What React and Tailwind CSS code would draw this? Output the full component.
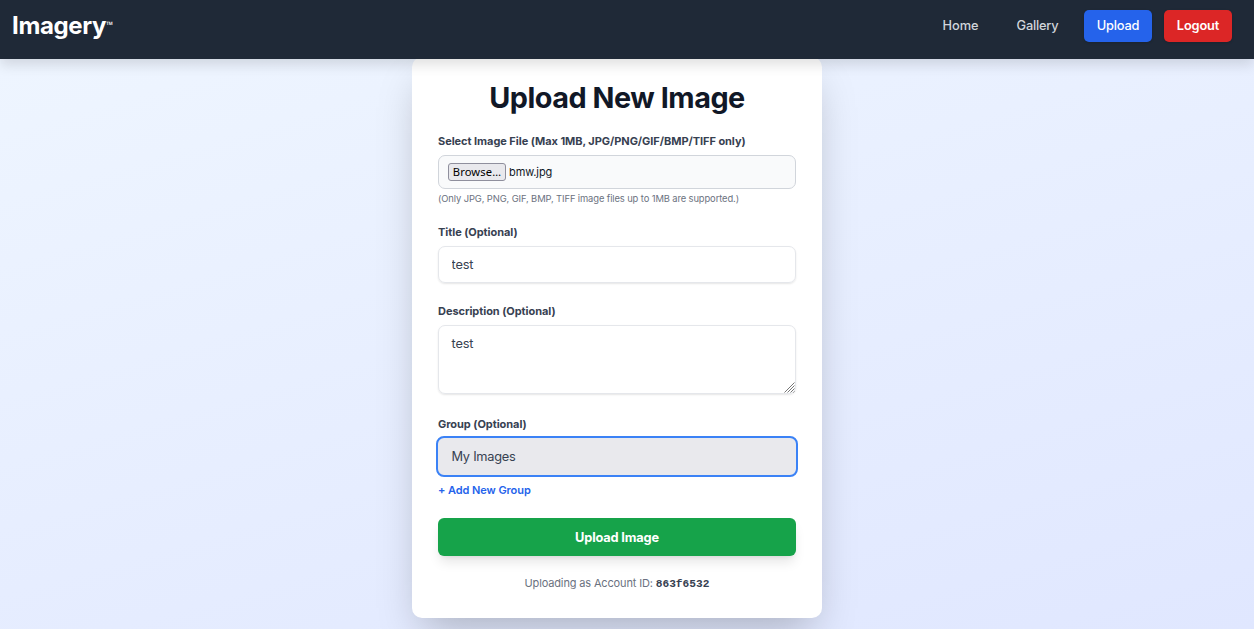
const NAV_ITEMS = [
  { label: "Home", className: "w-[62px] pr-px text-[#d1d5db] font-medium tracking-[-0.08px]" },
  { label: "Gallery", className: "w-[68px] pr-px text-[#d1d5db] font-medium tracking-[-0.2px]" },
  { label: "Upload", className: "w-[68px] bg-[#2563eb] text-white font-medium tracking-[-0.2px] shadow-sm" },
  { label: "Logout", className: "w-[68px] bg-[#dc2626] text-white font-semibold tracking-[-0.15px] shadow-sm" },
];

function Label({ children }) {
  return (
    <div className="mb-[6px] h-4 text-[11px] leading-4 font-bold tracking-[-0.05px] text-[#374151]">{children}</div>
  );
}

function Header() {
  return (
    <header className="relative z-10 flex h-[59px] items-start justify-between bg-[#1f2937] pr-[22px] pl-[12px] shadow-[0_6px_12px_0_rgba(0,0,0,0.12)]">
      <div className="flex pt-[10px] text-white">
        <span className="text-[24px] leading-[32px] font-bold tracking-[-0.35px]">Imagery</span>
        <span className="pt-[7px] font-['Noto_Sans',sans-serif] text-[9px] leading-[16px] font-medium">™</span>
      </div>
      <nav className="flex gap-3 pt-[10px]">
        {NAV_ITEMS.map((item) => (
          <a
            key={item.label}
            href="#"
            className={`flex h-8 items-center justify-center rounded-[5px] text-[12.8px] ${item.className}`}
          >
            {item.label}
          </a>
        ))}
      </nav>
    </header>
  );
}

export default function App() {
  return (
    <div className="h-[629px] overflow-hidden bg-[linear-gradient(164deg,#eff6ff,#e0e7ff)] font-['Inter',sans-serif]">
      <Header />
      <main className="-mt-[2px] ml-[412px] h-[561px] w-[410px] rounded-[10px] bg-white px-[26px] pt-[23px] shadow-[0_20px_40px_-10px_rgba(0,0,0,0.25)]">
        <h1 className="mb-[17px] h-9 text-center text-[28.8px] leading-9 font-bold tracking-[-0.47px] whitespace-nowrap text-[#111827]">
          Upload New Image
        </h1>

        <Label>Select Image File (Max 1MB, JPG/PNG/GIF/BMP/TIFF only)</Label>
        <div className="flex h-[34px] items-center rounded-[7px] border border-[#d1d5db] bg-[#f9fafb] pl-[9px] text-[11px] text-[#111827]">
          <button className="flex h-[18px] w-[58px] items-center justify-center rounded-[3px] border border-[#8f8f9d] bg-[#e9e9ed] font-['Noto_Sans',sans-serif] text-[11.2px] tracking-[0.15px] text-black">
            Browse…
          </button>
          <span className="ml-[3px] tracking-[-0.1px]">bmw.jpg</span>
        </div>
        <p className="mt-[3px] h-[13px] text-[9.4px] leading-[13px] tracking-[-0.11px] text-[#6b7280]">
          (Only JPG, PNG, GIF, BMP, TIFF image files up to 1MB are supported.)
        </p>

        <div className="mt-[19px]">
          <Label>Title (Optional)</Label>
          <input
            className="block h-[37px] w-full rounded-[7px] border border-[#e5e7eb] px-[12.5px] text-[12.8px] tracking-[-0.15px] text-[#374151] shadow-[0_1px_2px_rgba(0,0,0,0.1)] outline-none"
            defaultValue="test"
          />
        </div>

        <div className="mt-5">
          <Label>Description (Optional)</Label>
          <div className="relative">
            <textarea
              className="block h-[69px] w-full resize-none rounded-[7px] border border-[#e5e7eb] px-[12.5px] py-[8px] text-[12.8px] leading-[19.2px] tracking-[-0.15px] text-[#374151] shadow-[0_1px_2px_rgba(0,0,0,0.1)] outline-none"
              defaultValue="test"
            />
            <svg
              className="absolute right-[1px] bottom-[1px]"
              width="11"
              height="11"
              viewBox="0 0 11 11"
              fill="none"
              stroke="#666"
              strokeWidth="0.9"
            >
              <path d="M0.5 10.5 10.5 0.5M3.5 10.5 10.5 3.5M6.5 10.5 10.5 6.5M9.5 10.5 10.5 9.5" />
            </svg>
          </div>
        </div>

        <div className="mt-[22px]">
          <Label>Group (Optional)</Label>
          <button className="-mx-[2px] -mt-[2px] flex h-[41px] w-[362px] items-center rounded-[8px] border-2 border-[#3b82f6] bg-[#e9e9ed] pl-[13.5px] text-[12.8px] tracking-[-0.25px] text-[#374151]">
            My Images
          </button>
          <a href="#" className="mt-[5px] block h-4 text-[11px] leading-4 font-semibold tracking-[-0.08px] text-[#2563eb]">
            + Add New Group
          </a>
        </div>

        <button className="mt-5 block h-[38px] w-full rounded-[6px] bg-[#16a34a] pt-px text-[12.8px] font-bold tracking-[-0.17px] text-white shadow-[0_8px_12px_-2px_rgba(0,0,0,0.1),0_3px_5px_-3px_rgba(0,0,0,0.1)]">
          Upload Image
        </button>
        <p className="mt-[19px] h-4 text-center text-[11px] leading-4 tracking-[-0.15px] text-[#6b7280]">
          Uploading as Account ID:{" "}
          <span className="font-['Liberation_Mono',monospace] text-[11.2px] font-bold tracking-normal text-[#374151]">863f6532</span>
        </p>
      </main>
    </div>
  );
}
